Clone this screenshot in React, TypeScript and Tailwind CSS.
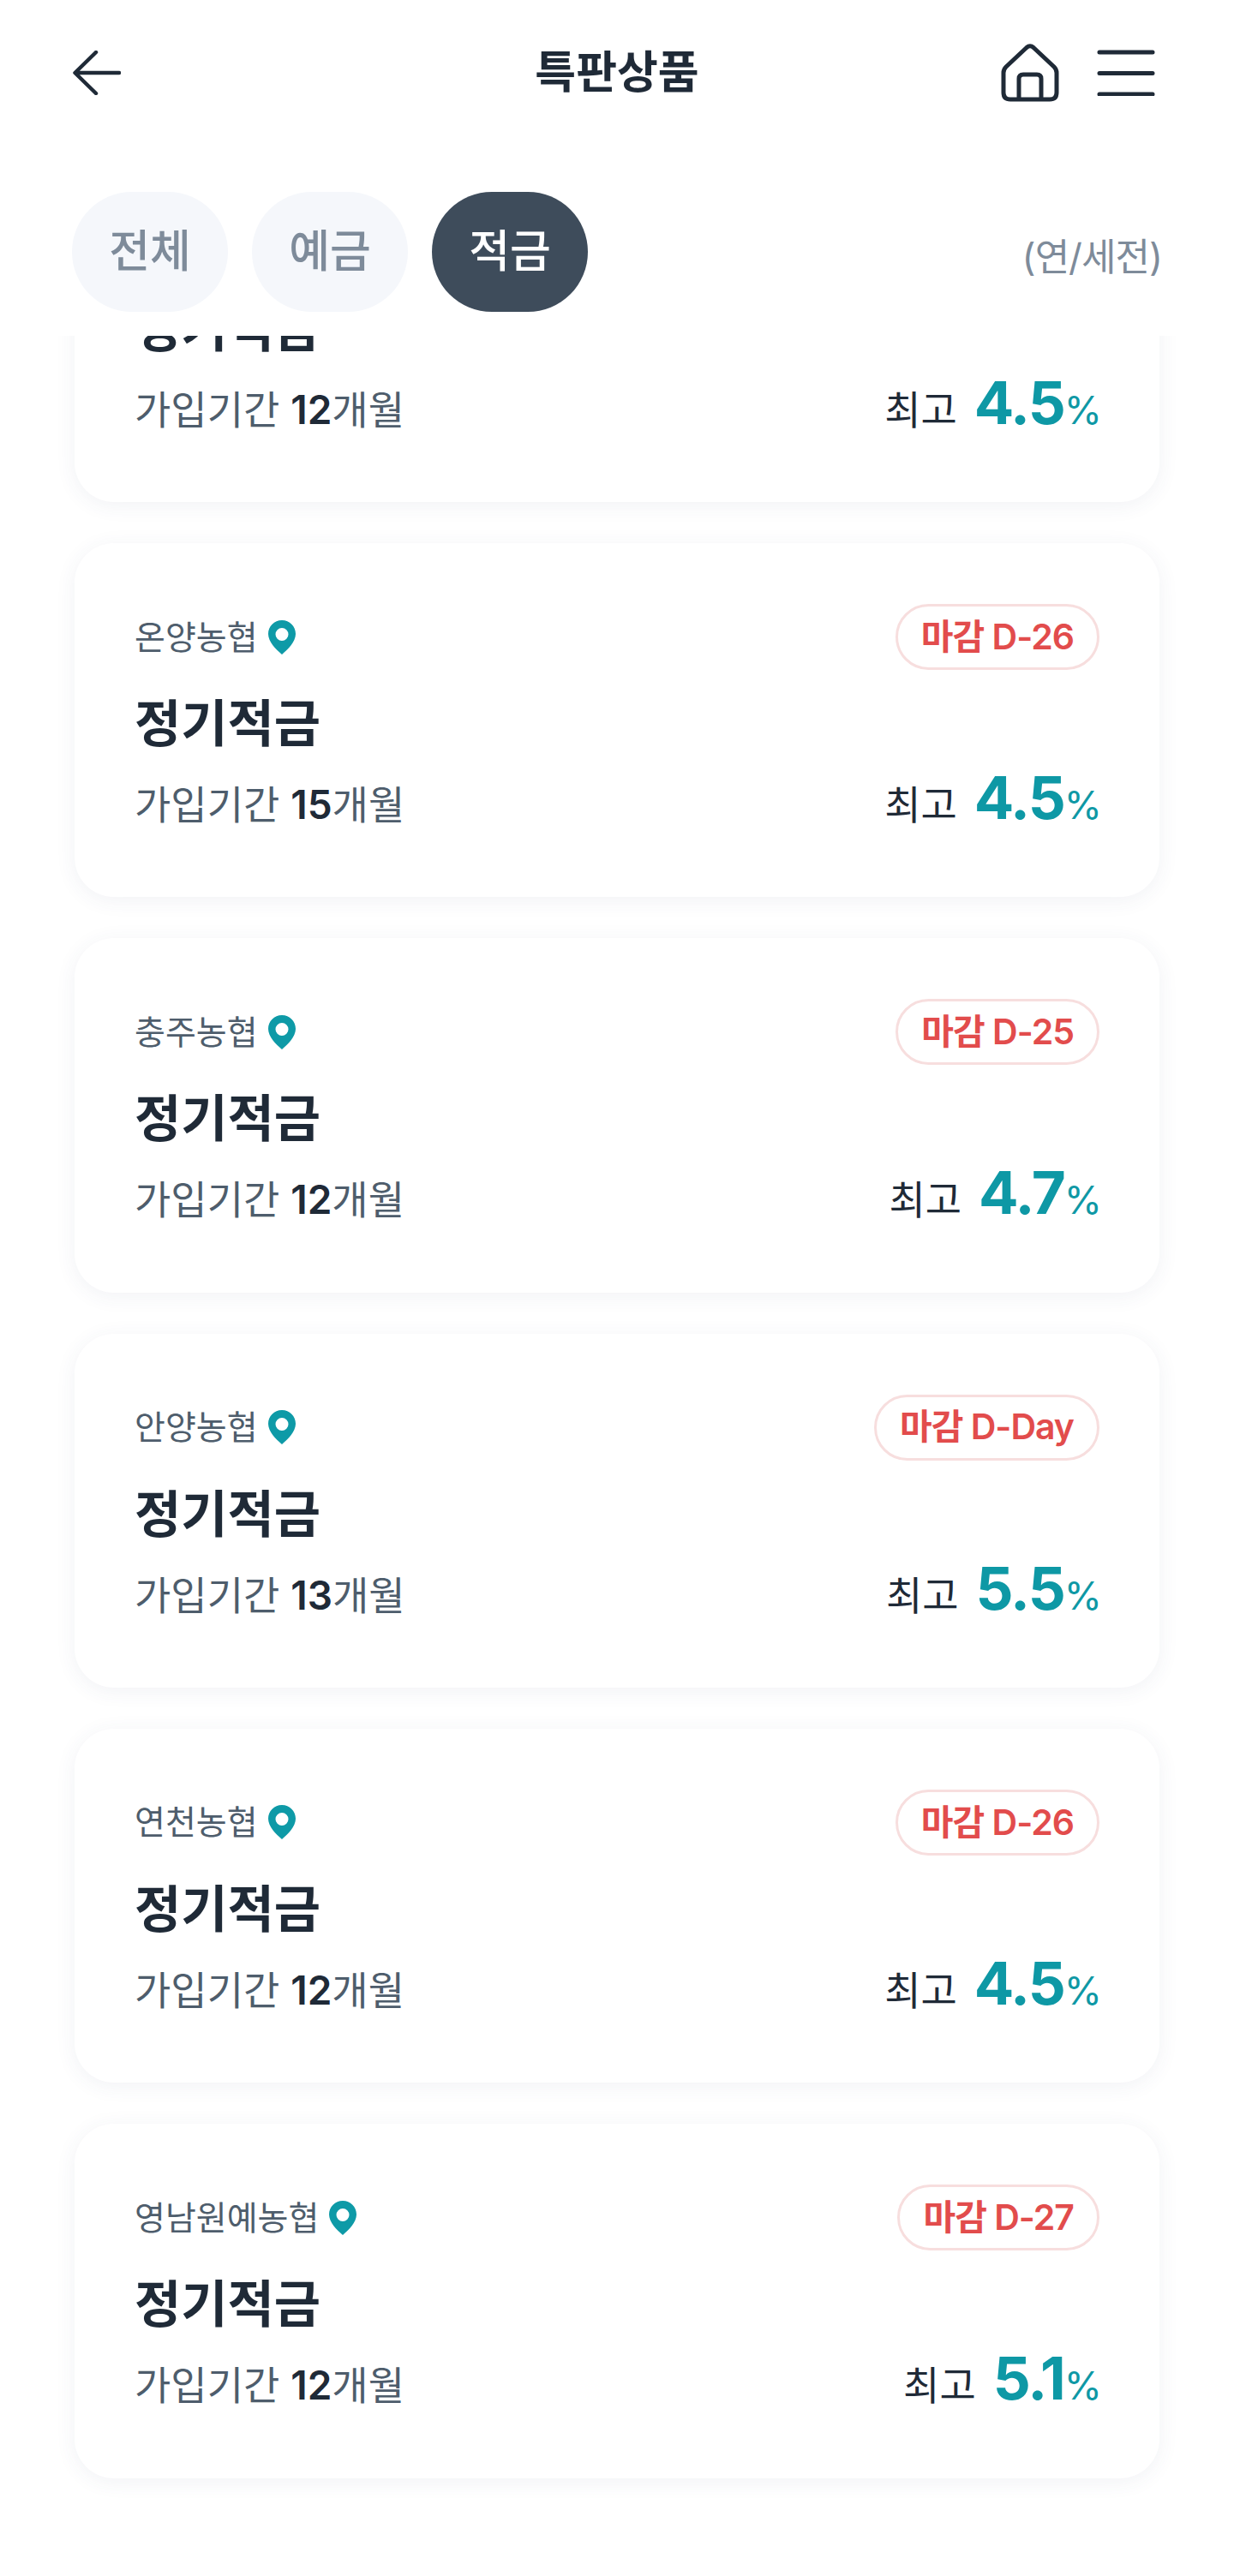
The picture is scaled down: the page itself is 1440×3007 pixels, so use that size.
const sans = "font-['Inter','Noto_Sans_CJK_KR',sans-serif]";

interface Product {
  bank: string;
  badge: string;
  months: number;
  rate: string;
}

const products: Product[] = [
  { bank: "청주농협", badge: "마감 D-24", months: 12, rate: "4.5" },
  { bank: "온양농협", badge: "마감 D-26", months: 15, rate: "4.5" },
  { bank: "충주농협", badge: "마감 D-25", months: 12, rate: "4.7" },
  { bank: "안양농협", badge: "마감 D-Day", months: 13, rate: "5.5" },
  { bank: "연천농협", badge: "마감 D-26", months: 12, rate: "4.5" },
  { bank: "영남원예농협", badge: "마감 D-27", months: 12, rate: "5.1" },
];

function Pin() {
  return (
    <svg width="32" height="40" viewBox="0 0 32 40" className="ml-[12px] shrink-0">
      <path
        fillRule="evenodd"
        d="M16 0C7 0 0 7 0 16c0 9 9 18 16 24 7-6 16-15 16-24C32 7 25 0 16 0Zm0 9a7.500 7.500 0 1 1 0 15 7.500 7.500 0 0 1 0-15Z"
        fill="#0E9AA7"
      />
    </svg>
  );
}

function ProductCard({ item, first }: { item: Product; first?: boolean }) {
  return (
    <div
      className={`h-[413.33px] rounded-[46px] bg-white px-[70px] pt-[71px] shadow-[0_4px_24px_rgba(60,70,110,0.07)] ${
        first ? "mt-[-219.33px]" : "mt-[48px]"
      }`}
    >
      <div className="flex h-[77px] items-center justify-between">
        <div className="flex items-center">
          <span className="text-[39px] leading-[48px] text-[#4E5D6C]">{item.bank}</span>
          <Pin />
        </div>
        <span className="flex h-[77px] items-center rounded-full border-[3px] border-[#F7DEDE] px-[27px] text-[41px] font-semibold tracking-[-1px] text-[#E24C4C]">
          {item.badge}
        </span>
      </div>
      <div className="mt-[28px] text-[59px] leading-[70px] font-bold text-[#1F2A37]">정기적금</div>
      <div className="mt-[16px] flex items-baseline justify-between leading-[70px]">
        <div className="text-[46px] text-[#4E5D6C]">
          가입기간 <span className="font-semibold text-[#1F2A37]">{item.months}</span>개월
        </div>
        <div className="mr-[-2px] flex items-baseline">
          <span className="mr-[20px] text-[46px] text-[#1F2A37]">최고</span>
          <span className="text-[69px] font-bold tracking-[-2px] text-[#0E98A5]">{item.rate}</span>
          <span className="text-[45px] tracking-[-1px] text-[#0E98A5]">%</span>
        </div>
      </div>
    </div>
  );
}

function Tab({ label, active }: { label: string; active?: boolean }) {
  return (
    <span
      className={`flex h-[140px] w-[182px] items-center justify-center rounded-full text-[52px] font-medium ${
        active ? "bg-[#3E4C5B] text-white" : "bg-[#F5F7FB] text-[#7E8B9A]"
      }`}
    >
      {label}
    </span>
  );
}

export default function App() {
  return (
    <div className={`flex h-[3007px] flex-col bg-white ${sans}`}>
      {/* Header */}
      <header className="grid h-[170px] shrink-0 grid-cols-[1fr_auto_1fr] items-center px-[85px]">
        <svg width="56" height="52" viewBox="0 0 56 52" fill="none" stroke="#1F2A37" strokeWidth="4.500" strokeLinecap="round" strokeLinejoin="round">
          <path d="M27 2 2.500 26 27 50M3 26h51" />
        </svg>
        <h1 className="text-[52px] font-semibold text-[#1F2A37]">특판상품</h1>
        <div className="mr-[7px] flex items-center justify-end gap-[44px]">
          <svg width="68" height="68" viewBox="0 0 68 68" fill="none" stroke="#1F2A37" strokeWidth="5" strokeLinejoin="round">
            <path d="M30 4.500 6 27q-3 3-3 7v23q0 8 8 8h46q8 0 8-8V34q0-4-3-7L38 4.500q-4-3.500-8 0Z" />
            <path d="M21 65V41q0-5 5-5h16q5 0 5 5v24" />
          </svg>
          <svg width="68" height="54" viewBox="0 0 68 54" stroke="#1F2A37" strokeWidth="5" strokeLinecap="round">
            <path d="M3 3h62M3 27.500h62M3 52h62" />
          </svg>
        </div>
      </header>

      {/* Tabs */}
      <div className="flex h-[222px] shrink-0 items-start justify-between pl-[84px] pr-[84px] pt-[54px]">
        <div className="flex gap-[28px]">
          <Tab label="전체" />
          <Tab label="예금" />
          <Tab label="적금" active />
        </div>
        <span className="mt-[46px] text-[44px] leading-[60px] tracking-[-1px] text-[#7E8B9A]">(연/세전)</span>
      </div>

      {/* List */}
      <div className="min-h-0 flex-1 overflow-hidden px-[87px]">
        {products.map((item, i) => (
          <ProductCard key={item.bank} item={item} first={i === 0} />
        ))}
      </div>
    </div>
  );
}
